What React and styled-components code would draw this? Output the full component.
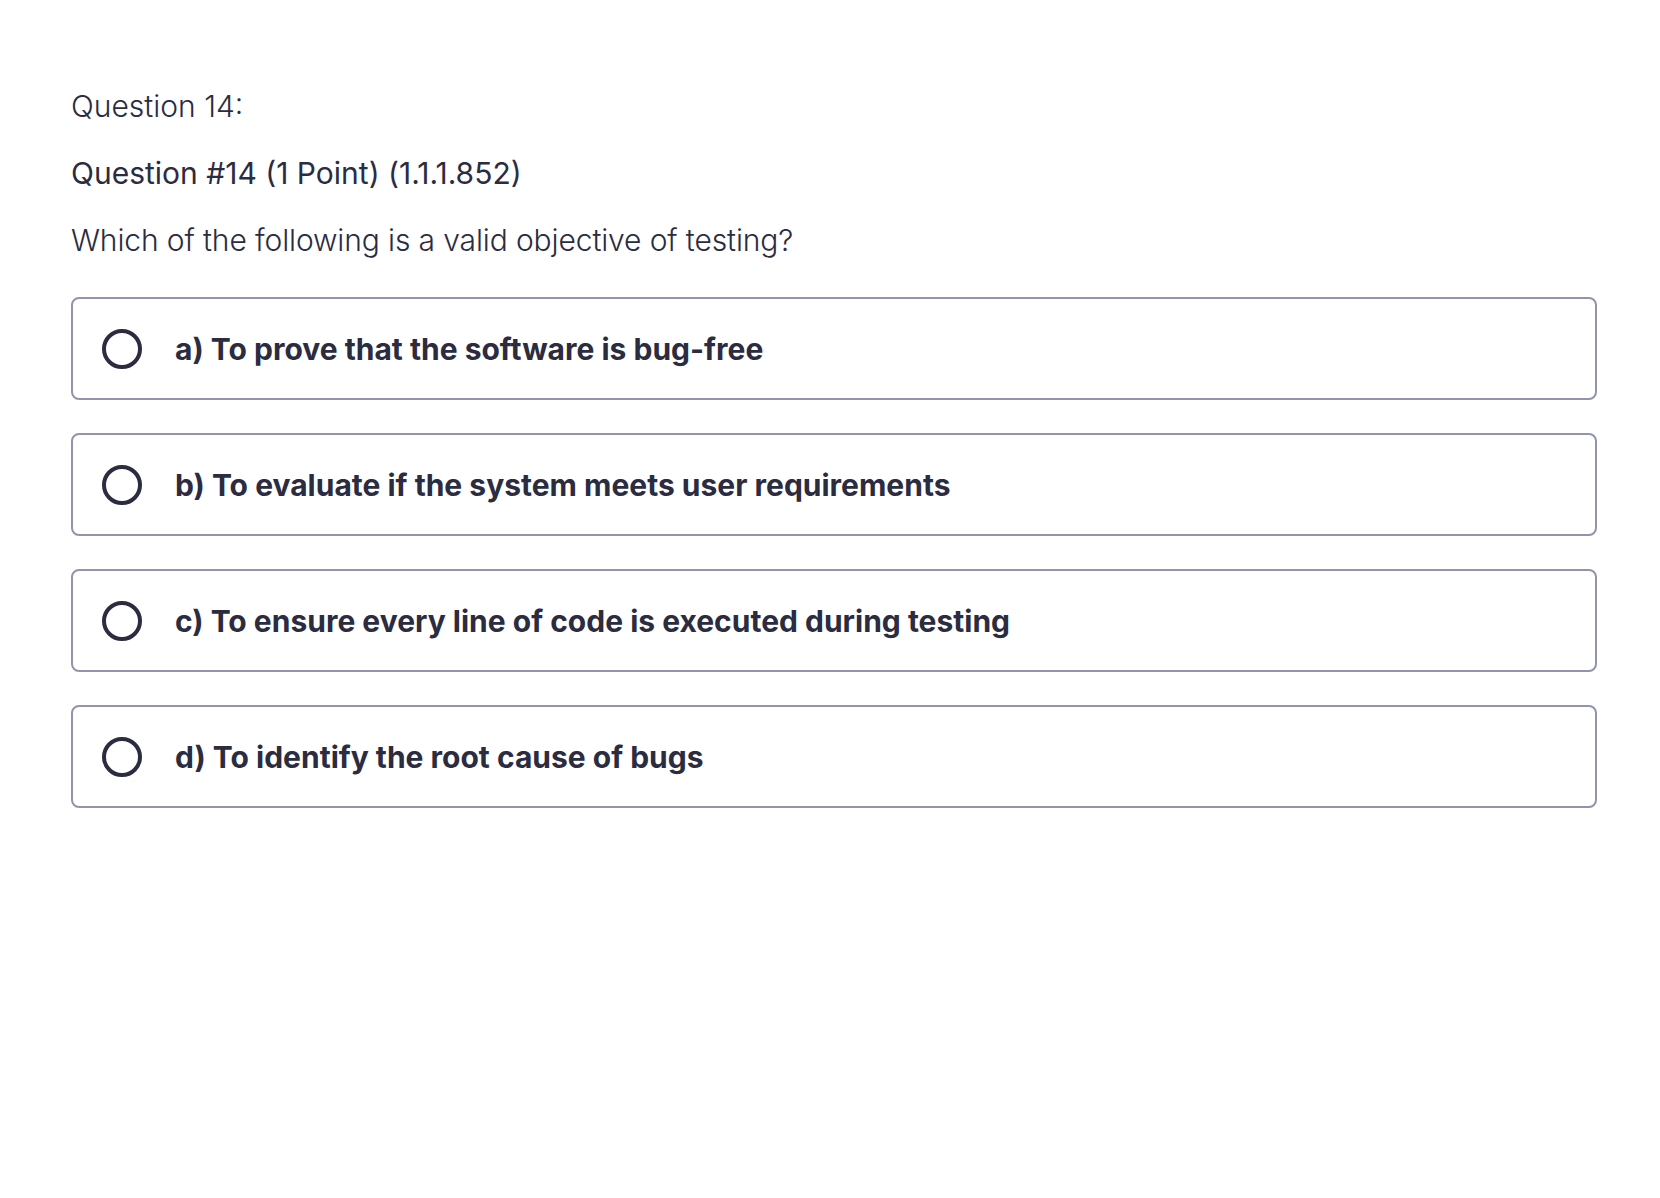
import styled, { createGlobalStyle } from 'styled-components';

const GlobalStyle = createGlobalStyle`
  html, body {
    margin: 0;
    padding: 0;
    background: #ffffff;
  }
  body {
    font-family: Inter, 'Noto Sans', sans-serif;
    color: #2b2c3f;
  }
`;

const options = [
  'a) To prove that the software is bug-free',
  'b) To evaluate if the system meets user requirements',
  'c) To ensure every line of code is executed during testing',
  'd) To identify the root cause of bugs',
];

const App = () => {
  return (
    <>
      <GlobalStyle />
      <Page>
        <Counter>Question 14:</Counter>
        <Title>Question #14 (1 Point) (1.1.1.852)</Title>
        <Prompt>Which of the following is a valid objective of testing?</Prompt>
        <Options>
          {options.map((text) => (
            <Option key={text}>
              <Radio />
              <OptionText>{text}</OptionText>
            </Option>
          ))}
        </Options>
      </Page>
    </>
  );
};

const Page = styled.main`
  padding: 86px 63px 0 71px;
`;

const Counter = styled.div`
  font-size: 30px;
  font-weight: 300;
  line-height: 40px;
  margin-bottom: 27px;
`;

const Title = styled.div`
  font-size: 30px;
  font-weight: 400;
  line-height: 40px;
  margin-bottom: 27px;
`;

const Prompt = styled.div`
  font-size: 30px;
  font-weight: 300;
  line-height: 40px;
  letter-spacing: -0.004em;
  margin-bottom: 37px;
`;

const Options = styled.div`
  display: flex;
  flex-direction: column;
  gap: 33px;
`;

const Option = styled.label`
  display: flex;
  align-items: center;
  gap: 33px;
  box-sizing: border-box;
  height: 103px;
  padding: 0 29px;
  border: 2px solid #9194ac;
  border-radius: 8px;
  cursor: pointer;
`;

const Radio = styled.span`
  flex: none;
  box-sizing: border-box;
  width: 40px;
  height: 40px;
  border: 4px solid #2b2c3f;
  border-radius: 50%;
`;

const OptionText = styled.span`
  font-size: 30px;
  font-weight: 700;
`;

export default App;
